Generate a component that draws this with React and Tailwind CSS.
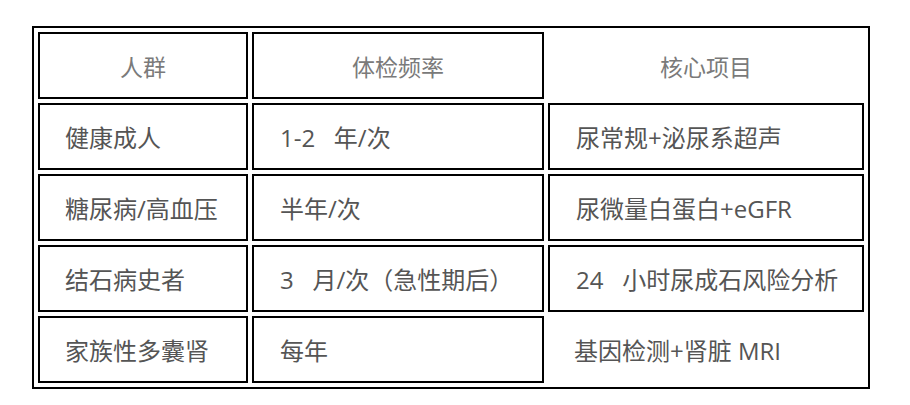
import React from 'react';

const rows = [
  { group: '健康成人', freq: '1-2\u00a0\u00a0\u00a0年/次', items: '尿常规+泌尿系超声' },
  { group: '糖尿病/高血压', freq: '半年/次', items: '尿微量白蛋白+eGFR' },
  { group: '结石病史者', freq: '3\u00a0\u00a0\u00a0月/次（急性期后）', items: '24\u00a0\u00a0\u00a0小时尿成石风险分析' },
  { group: '家族性多囊肾', freq: '每年', items: '基因检测+肾脏 MRI', plain: true },
];

const App = () => {
  return (
    <div
      className="w-[910px] h-[405px] bg-white pt-[26px] pl-[32px]"
      style={{ fontFamily: '"Open Sans", "Noto Sans CJK SC", sans-serif' }}
    >
      <table className="table-fixed border-separate border-spacing-[4px] border-2 border-black">
        <thead>
          <tr className="h-[67px]">
            <th className="w-[210px] border-2 border-black pt-[4px] text-center font-normal text-[23px] text-[#7a7a7a]">人群</th>
            <th className="w-[292px] border-2 border-black pt-[4px] text-center font-normal text-[23px] text-[#7a7a7a]">体检频率</th>
            <th className="w-[316px] border-2 border-transparent pt-[4px] text-center font-normal text-[23px] text-[#7a7a7a]">核心项目</th>
          </tr>
        </thead>
        <tbody>
          {rows.map((row) => (
            <tr key={row.group} className="h-[67px]">
              <td className="border-2 border-black pl-[25px] pt-[2px] text-[24px] text-[#555]">{row.group}</td>
              <td className="border-2 border-black pl-[26px] pt-[2px] text-[24px] text-[#555]">{row.freq}</td>
              <td
                className={
                  row.plain
                    ? 'border-2 border-transparent pl-[24px] pt-[2px] text-[24px] text-[#555]'
                    : 'border-2 border-black pl-[26px] pt-[2px] text-[24px] text-[#555]'
                }
              >
                {row.items}
              </td>
            </tr>
          ))}
        </tbody>
      </table>
    </div>
  );
};

export default App;
